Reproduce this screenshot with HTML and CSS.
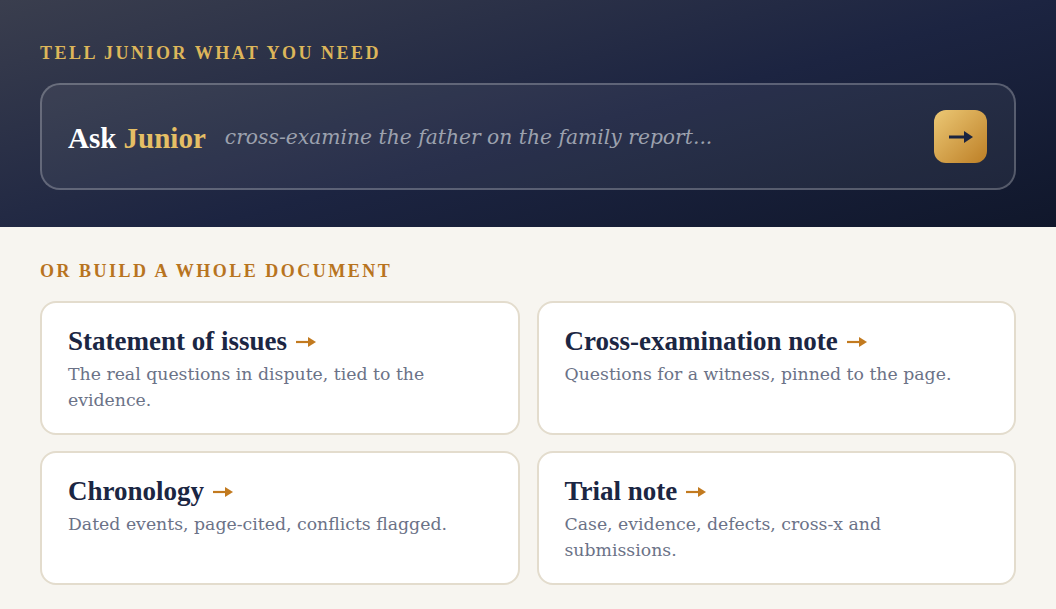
FILE: index.html
```html
<!DOCTYPE html>
<html lang="en">
<head>
  <meta charset="UTF-8" />
  <meta name="viewport" content="width=device-width, initial-scale=1.0"/>
  <title>Junior</title>
  <link rel="stylesheet" href="styles.css">
</head>
<body>

<!-- Ask box -->
<header class="hero">
  <div class="eyebrow">Tell Junior what you need</div>
  <div class="ask-box">
    <div class="ask-label">Ask <span class="gold">Junior</span></div>
    <div class="ask-placeholder">cross-examine the father on the family report...</div>
    <button class="ask-go" aria-label="Send">
      <svg width="24" height="14" viewBox="0 0 24 14">
        <line x1="0" y1="7" x2="16" y2="7" stroke="#1b2440" stroke-width="3"/>
        <polygon points="15,1 24,7 15,13" fill="#1b2440"/>
      </svg>
    </button>
  </div>
</header>

<!-- Document builders -->
<section class="builders">
  <div class="eyebrow eyebrow-dark">Or build a whole document</div>
  <div class="card-grid">
    <a class="card" href="#">
      <div class="card-title">Statement of issues <svg class="arrow" width="20" height="12" viewBox="0 0 20 12"><line x1="0" y1="6" x2="13" y2="6" stroke="#c27a1f" stroke-width="2.2"/><polygon points="12,1 20,6 12,11" fill="#c27a1f"/></svg></div>
      <div class="card-desc">The real questions in dispute, tied to the evidence.</div>
    </a>
    <a class="card" href="#">
      <div class="card-title">Cross-examination note <svg class="arrow" width="20" height="12" viewBox="0 0 20 12"><line x1="0" y1="6" x2="13" y2="6" stroke="#c27a1f" stroke-width="2.2"/><polygon points="12,1 20,6 12,11" fill="#c27a1f"/></svg></div>
      <div class="card-desc">Questions for a witness, pinned to the page.</div>
    </a>
    <a class="card" href="#">
      <div class="card-title">Chronology <svg class="arrow" width="20" height="12" viewBox="0 0 20 12"><line x1="0" y1="6" x2="13" y2="6" stroke="#c27a1f" stroke-width="2.2"/><polygon points="12,1 20,6 12,11" fill="#c27a1f"/></svg></div>
      <div class="card-desc">Dated events, page-cited, conflicts flagged.</div>
    </a>
    <a class="card" href="#">
      <div class="card-title">Trial note <svg class="arrow" width="20" height="12" viewBox="0 0 20 12"><line x1="0" y1="6" x2="13" y2="6" stroke="#c27a1f" stroke-width="2.2"/><polygon points="12,1 20,6 12,11" fill="#c27a1f"/></svg></div>
      <div class="card-desc">Case, evidence, defects, cross-x and submissions.</div>
    </a>
  </div>
</section>

</body>
</html>
```

FILE: styles.css
```css
body { margin: 0; background: #f7f5f0; font-family: "DejaVu Serif", serif; }

.hero {
  padding: 41px 40px 37px;
  background: linear-gradient(165deg, #3a3e4e 0%, #1c2441 55%, #10172b 100%);
}
.eyebrow {
  font-family: "Liberation Serif", serif; font-weight: bold;
  font-size: 18px; line-height: 24px; letter-spacing: 2.5px;
  text-transform: uppercase; color: #ddb65a;
  margin-bottom: 18px;
}
.eyebrow-dark { color: #b8741f; }

.ask-box {
  display: flex; align-items: center;
  padding: 25px 27px 25px 26px;
  border: 2px solid rgba(255, 255, 255, 0.24);
  border-radius: 20px;
  background: rgba(255, 255, 255, 0.06);
}
.ask-label {
  font-family: "Liberation Serif", serif; font-weight: bold;
  font-size: 29px; color: #fff; margin: 4px 19px 0 0;
}
.gold { color: #e5bf65; }
.ask-placeholder {
  flex: 1; font-style: italic; font-size: 20.3px; color: #9ca1ae;
}
.ask-go {
  width: 53px; height: 53px; border: 0; border-radius: 12px; padding: 0;
  display: flex; align-items: center; justify-content: center;
  background: linear-gradient(135deg, #ecc875 0%, #bd7f26 100%);
}

.builders { padding: 32px 40px 24px; }
.card-grid {
  display: grid; grid-template-columns: 1fr 1fr;
  column-gap: 17px; row-gap: 16px;
}
.card {
  display: block; text-decoration: none;
  background: #fff; border: 2px solid #e3dccd; border-radius: 16px;
  padding: 21px 26px 20px;
}
.card-title {
  font-family: "Liberation Serif", serif; font-weight: bold;
  font-size: 27px; line-height: 34px; color: #1b2643;
}
.arrow { vertical-align: 2px; margin-left: 2px; }
.card-desc {
  margin-top: 3px; font-size: 17.3px; line-height: 26px; color: #6b7287;
}
```
